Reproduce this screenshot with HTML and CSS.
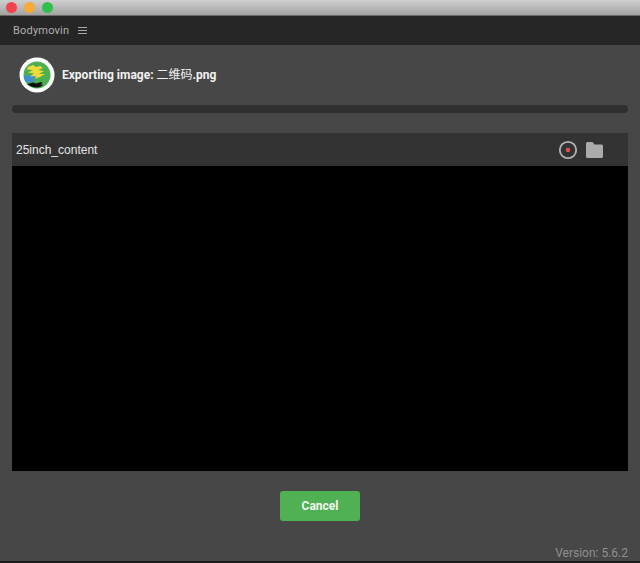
FILE: index.html
```html
<!DOCTYPE html>
<html lang="zh-CN">
<head>
    <meta charset="UTF-8">
    <title>Bodymovin</title>
    <link rel="stylesheet" href="styles.css">
</head>
<body>
    <div class="window">
        <div class="titlebar">
            <span class="light light-red"></span>
            <span class="light light-yellow"></span>
            <span class="light light-green"></span>
        </div>
        <div class="tabbar">
            <span class="tab-name">Bodymovin</span>
            <svg class="tab-menu" width="9" height="8" viewBox="0 0 9 8">
                <path d="M0 .5h9M0 3.500h9M0 6.500h9" stroke="#a8a8a8" stroke-width="1" fill="none"/>
            </svg>
        </div>
        <div class="main">
            <div class="status">
                <svg class="logo" width="36" height="36" viewBox="0 0 36 36">
                    <circle cx="18" cy="18" r="17.500" fill="#fff"/>
                    <circle cx="18" cy="18" r="13.500" fill="#4caf50"/>
                    <path d="M8 27l6-1.500 3 1 5-1.500 2 1.500-3 .5 3 1c-1.500 1.500-4 2.500-6 2.500-4 0-7.500-1.500-10-3.500z" fill="#0f0f0f"/>
                    <path d="M5 19l6-1 6 2-3 2 2 2-5 1.500-4-.5c-1-1.500-1.800-3.500-2-6z" fill="#3f8fd2"/>
                    <path d="M9 10l5-2 3 2 4-1 3 2-5 2 6 1-5 3 6 0-5 3-5 1.500 1-2.500-6 .5 4-3-6-1 5-2.500-6-.5z" fill="#f2da3a"/>
                </svg>
                <p class="status-text">Exporting image: <span class="file-name">二维码</span>.png</p>
            </div>
            <div class="progress"></div>
            <div class="comp">
                <div class="comp-head">
                    <span class="comp-name">25inch_content</span>
                    <svg class="comp-icon" width="20" height="20" viewBox="0 0 20 20">
                        <circle cx="10" cy="10" r="8.200" fill="none" stroke="#b4b4b4" stroke-width="1.800"/>
                        <rect x="8" y="8" width="4" height="4" rx="1" fill="#e2504c"/>
                    </svg>
                    <svg class="comp-icon folder" width="17" height="16" viewBox="0 0 17 16">
                        <path d="M0 1.500a1.500 1.500 0 0 1 1.500-1.500h5l2 2.500h7a1.500 1.500 0 0 1 1.500 1.500v10.500a1.500 1.500 0 0 1-1.500 1.500h-14a1.500 1.500 0 0 1-1.500-1.500z" fill="#ababab"/>
                    </svg>
                </div>
                <div class="comp-preview"></div>
            </div>
            <div class="actions">
                <button type="button" class="btn-cancel">Cancel</button>
            </div>
            <div class="version">Version: 5.6.2</div>
        </div>
    </div>
</body>
</html>
```

FILE: styles.css
```css
html, body {
    margin: 0;
    padding: 0;
    background-color: #1c1c1c;
}
.window {
    display: flex;
    flex-direction: column;
    width: 640px;
    height: 561px;
    font-family: Roboto, "Noto Sans CJK SC", sans-serif;
    overflow: hidden;
}
.titlebar {
    display: flex;
    align-items: center;
    gap: 7px;
    flex: 0 0 16px;
    padding-left: 6px;
    box-sizing: border-box;
    background: linear-gradient(#cfcfcf, #a2a2a2);
    border-bottom: 1px solid #6a6a6a;
}
.light {
    width: 11px;
    height: 11px;
    border-radius: 50%;
}
.light-red {
    background-color: #f2444f;
}
.light-yellow {
    background-color: #f5ab35;
}
.light-green {
    background-color: #2ec04a;
}
.tabbar {
    display: flex;
    align-items: center;
    flex: 0 0 29px;
    padding-left: 13px;
    background-color: #262626;
}
.tab-name {
    font-size: 11px;
    letter-spacing: .2px;
    color: #b0b0b0;
}
.tab-menu {
    margin-left: 9px;
}
.main {
    flex: 1;
    display: flex;
    flex-direction: column;
    padding: 0 12px;
    background-color: #474747;
}
.status {
    display: flex;
    align-items: center;
    height: 36px;
    margin-top: 12px;
    padding-left: 7px;
}
.logo {
    flex: none;
}
.status-text {
    margin: 0 0 3px 7px;
    font-size: 12px;
    font-weight: 700;
    color: #f2f2f2;
}
.file-name {
    font-weight: 400;
}
.progress {
    height: 8px;
    margin-top: 12px;
    border-radius: 4px;
    background-color: #303030;
}
.comp {
    margin-top: 20px;
}
.comp-head {
    display: flex;
    align-items: center;
    height: 33px;
    padding: 0 25px 0 4px;
    background-color: #333;
}
.comp-name {
    flex: 1;
    font-family: "Liberation Sans", sans-serif;
    font-size: 12px;
    color: #e4e4e4;
}
.folder {
    margin-left: 8px;
}
.comp-preview {
    height: 305px;
    background-color: #000;
}
.actions {
    display: flex;
    justify-content: center;
    margin-top: 20px;
}
.btn-cancel {
    width: 80px;
    height: 30px;
    padding: 0;
    border: none;
    border-radius: 3px;
    background-color: #4fb153;
    color: #f2f7f2;
    font-family: Roboto, sans-serif;
    font-size: 12px;
    font-weight: 700;
}
.version {
    margin-top: auto;
    padding-bottom: 1px;
    text-align: right;
    font-size: 12px;
    color: #8f8f8f;
}
```
